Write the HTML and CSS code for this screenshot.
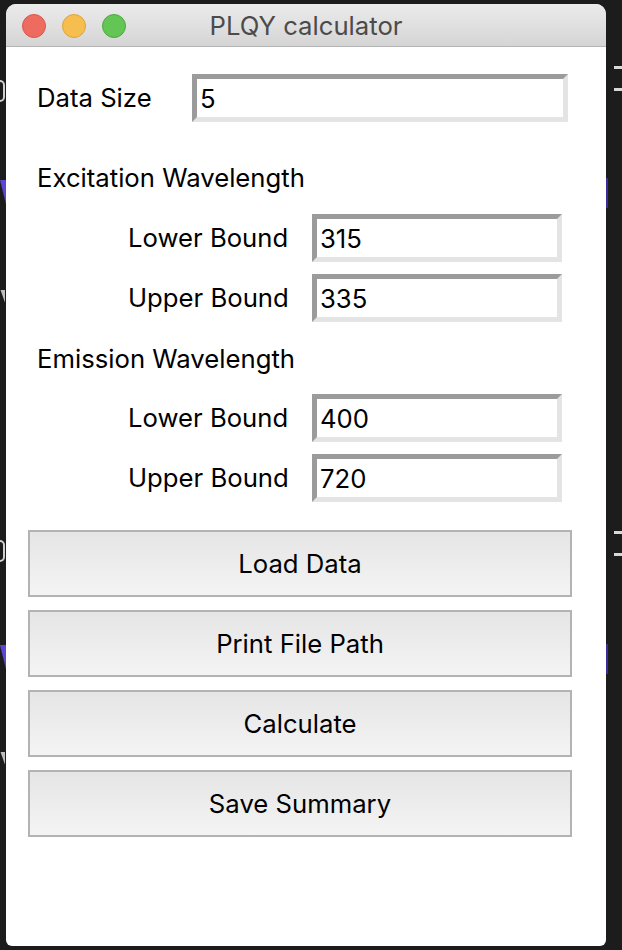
FILE: index.html
```html
<!DOCTYPE html>
<html lang="en">
<head>
<meta charset="utf-8">
<title>PLQY calculator</title>
<link rel="stylesheet" href="styles.css">
</head>
<body>
<div class="desk">
  <span class="frag frag-white" style="top:80px"></span>
  <span class="frag frag-purple" style="top:180px"></span>
  <span class="frag frag-gray" style="top:290px"></span>
  <span class="frag frag-white" style="top:540px"></span>
  <span class="frag frag-purple" style="top:645px"></span>
  <span class="frag frag-gray" style="top:752px"></span>
  <span class="rdash" style="top:66px"></span>
  <span class="rdash" style="top:88px"></span>
  <span class="rdash" style="top:531px"></span>
  <span class="rdash" style="top:553px"></span>
  <span class="rline" style="top:178px"></span>
  <span class="rline" style="top:644px"></span>
</div>
<div class="window">
  <div class="titlebar">
    <div class="lights">
      <span class="light red"></span>
      <span class="light yellow"></span>
      <span class="light green"></span>
    </div>
    <div class="title">PLQY calculator</div>
  </div>
  <div class="content">
    <div class="row main-row">
      <label class="lbl main-lbl">Data Size</label>
      <input class="entry entry-wide" type="text" value="5">
    </div>

    <div class="heading heading-first">Excitation Wavelength</div>
    <div class="row sub-row">
      <label class="lbl sub-lbl">Lower Bound</label>
      <input class="entry entry-sub" type="text" value="315">
    </div>
    <div class="row sub-row gap-row">
      <label class="lbl sub-lbl">Upper Bound</label>
      <input class="entry entry-sub" type="text" value="335">
    </div>

    <div class="heading heading-second">Emission Wavelength</div>
    <div class="row sub-row">
      <label class="lbl sub-lbl">Lower Bound</label>
      <input class="entry entry-sub" type="text" value="400">
    </div>
    <div class="row sub-row gap-row">
      <label class="lbl sub-lbl">Upper Bound</label>
      <input class="entry entry-sub" type="text" value="720">
    </div>

    <div class="buttons">
      <button class="btn">Load Data</button>
      <button class="btn">Print File Path</button>
      <button class="btn">Calculate</button>
      <button class="btn">Save Summary</button>
    </div>
  </div>
</div>
</body>
</html>
```

FILE: styles.css
```css
* { box-sizing: border-box; }

html, body {
  margin: 0;
  padding: 0;
  background: #1c1c1c;
  width: 622px;
  height: 950px;
  overflow: hidden;
  font-family: Inter, "Noto Sans", "Liberation Sans", sans-serif;
}

body { position: relative; padding-top: 4px; padding-left: 6px; }

.desk { position: absolute; inset: 0; }

.frag { position: absolute; left: 0; width: 5px; }
.frag-white { height: 22px; border: 2px solid #cfcfcf; border-left: none; border-radius: 0 8px 8px 0; }
.frag-purple { height: 24px; width: 6px; background: linear-gradient(to bottom left, #5b46d6 45%, transparent 55%); }
.frag-gray { height: 14px; width: 5px; background: linear-gradient(to bottom left, #bdbdbd 40%, transparent 50%); }

.rdash { position: absolute; left: 614px; width: 8px; height: 3px; background: #d8d8d8; }
.rline { position: absolute; left: 606px; width: 2px; height: 30px; background: #3a2c9a; }

.window {
  position: relative;
  width: 600px;
  height: 942px;
  background: #ffffff;
  border-radius: 10px 10px 6px 6px;
  overflow: hidden;
  display: flex;
  flex-direction: column;
}

.titlebar {
  height: 43px;
  flex: none;
  background: linear-gradient(to bottom, #ebebeb, #d5d5d5);
  border-bottom: 1px solid #b4b4b4;
  display: flex;
  align-items: center;
  justify-content: center;
  position: relative;
}

.lights {
  position: absolute;
  left: 16px;
  top: 10px;
  display: flex;
  gap: 16px;
}

.light {
  width: 24px;
  height: 24px;
  border-radius: 50%;
  display: block;
}
.red { background: #ee6b60; border: 1px solid #d8574c; }
.yellow { background: #f6be4f; border: 1px solid #dba43b; }
.green { background: #62c554; border: 1px solid #4ea83f; }

.title {
  font-size: 25.7px;
  color: #4b4b4b;
  margin-top: 1px;
}

.content {
  flex: 1;
  padding: 27px 0 0 0;
}

.row {
  display: flex;
  align-items: center;
  height: 48px;
}

.lbl {
  font-size: 25.7px;
  color: #000;
  line-height: 1;
}

.main-lbl { width: 186px; padding-left: 31px; }
.sub-lbl { width: 306px; padding-left: 122px; }

.entry {
  height: 48px;
  border-style: solid;
  border-width: 5px;
  border-color: #9b9b9b #e4e4e4 #e4e4e4 #9b9b9b;
  background: #fff;
  font-family: inherit;
  font-size: 25.7px;
  color: #000;
  padding: 0 0 0 3px;
  margin: 0;
  outline: none;
  border-radius: 0;
}
.entry-wide { width: 376px; }
.entry-sub { width: 250px; }

.gap-row { margin-top: 12px; }

.heading {
  font-size: 25.7px;
  line-height: 36px;
  height: 36px;
  color: #000;
  padding-left: 31px;
}
.heading-first { margin-top: 38px; margin-bottom: 18px; }
.heading-second { margin-top: 19px; margin-bottom: 17px; }

.buttons {
  margin-top: 28px;
  padding-left: 22px;
  display: flex;
  flex-direction: column;
  gap: 13px;
}

.btn {
  width: 544px;
  height: 67px;
  border: 2px solid #b3b3b3;
  background: linear-gradient(to bottom, #e5e5e5, #f4f4f4);
  font-family: inherit;
  font-size: 25.7px;
  color: #000;
  margin: 0;
  padding: 0;
  border-radius: 0;
}
```
